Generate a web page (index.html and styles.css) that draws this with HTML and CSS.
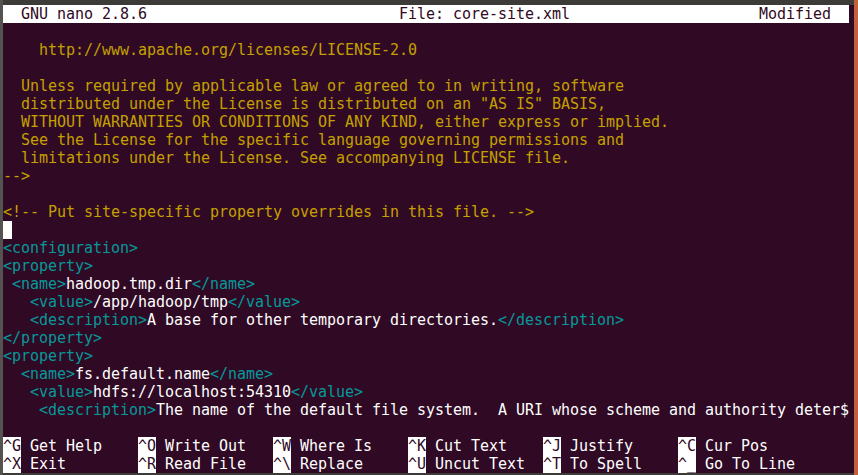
FILE: index.html
```html
<!DOCTYPE html>
<html>

<head>
  <title>GNU nano 2.8.6 - core-site.xml</title>
  <link rel="stylesheet" href="styles.css">
</head>

<body>
  <div class="edge-left"></div>
  <div class="window">
    <div class="chrome"></div>
    <div class="term">
      <div class="titlebar">  GNU nano 2.8.6                            File: core-site.xml                     Modified  </div>
<pre class="buffer">

<span class="cm">    http://www.apache.org/licenses/LICENSE-2.0</span>

<span class="cm">  Unless required by applicable law or agreed to in writing, software</span>
<span class="cm">  distributed under the License is distributed on an "AS IS" BASIS,</span>
<span class="cm">  WITHOUT WARRANTIES OR CONDITIONS OF ANY KIND, either express or implied.</span>
<span class="cm">  See the License for the specific language governing permissions and</span>
<span class="cm">  limitations under the License. See accompanying LICENSE file.</span>
<span class="cm">--&gt;</span>

<span class="cm">&lt;!-- Put site-specific property overrides in this file. --&gt;</span>
<span class="cursor"> </span>
<span class="tg">&lt;configuration&gt;</span>
<span class="tg">&lt;property&gt;</span>
 <span class="tg">&lt;name&gt;</span>hadoop.tmp.dir<span class="tg">&lt;/name&gt;</span>
   <span class="tg">&lt;value&gt;</span>/app/hadoop/tmp<span class="tg">&lt;/value&gt;</span>
   <span class="tg">&lt;description&gt;</span>A base for other temporary directories.<span class="tg">&lt;/description&gt;</span>
<span class="tg">&lt;/property&gt;</span>
<span class="tg">&lt;property&gt;</span>
  <span class="tg">&lt;name&gt;</span>fs.default.name<span class="tg">&lt;/name&gt;</span>
   <span class="tg">&lt;value&gt;</span>hdfs://localhost:54310<span class="tg">&lt;/value&gt;</span>
    <span class="tg">&lt;description&gt;</span>The name of the default file system.  A URI whose scheme and authority deter$

</pre>
      <div class="shortcuts">
        <div class="item"><span class="key">^G</span> Get Help</div>
        <div class="item"><span class="key">^O</span> Write Out</div>
        <div class="item"><span class="key">^W</span> Where Is</div>
        <div class="item"><span class="key">^K</span> Cut Text</div>
        <div class="item"><span class="key">^J</span> Justify</div>
        <div class="item"><span class="key">^C</span> Cur Pos</div>
        <div class="item"><span class="key">^X</span> Exit</div>
        <div class="item"><span class="key">^R</span> Read File</div>
        <div class="item"><span class="key">^\</span> Replace</div>
        <div class="item"><span class="key">^U</span> Uncut Text</div>
        <div class="item"><span class="key">^T</span> To Spell</div>
        <div class="item"><span class="key">^_</span> Go To Line</div>
      </div>
    </div>
  </div>
  <div class="edge-right"></div>
</body>

</html>
```

FILE: styles.css
```css
body {
margin: 0;
display: flex;
height: 475px;
overflow: hidden;
background-color: #3c3b37;
}

.edge-left {
width: 3px;
background-color: #55534f;
}

.edge-right {
width: 4px;
background-color: #c0603c;
}

.window {
width: 851px;
display: flex;
flex-direction: column;
}

.chrome {
height: 5px;
background-color: #3c3b37;
}

.term {
height: 468px;
background-color: #300a24;
color: #ffffff;
font-family: "DejaVu Sans Mono", "Liberation Mono", monospace;
font-size: 15px;
line-height: 18px;
letter-spacing: -0.03px;
}

.titlebar {
width: 846px;
height: 18px;
white-space: pre;
background-color: #ffffff;
color: #300a24;
}

.buffer {
margin: 0;
font: inherit;
height: 414px;
overflow: hidden;
}

.cm {
color: #c4a000;
}

.tg {
color: #06989a;
}

.cursor {
display: inline-block;
width: 9px;
height: 18px;
vertical-align: top;
background-color: #ffffff;
}

.shortcuts {
display: grid;
grid-template-columns: repeat(6, 135px);
}

.item {
white-space: pre;
height: 18px;
}

.key {
display: inline-block;
height: 18px;
vertical-align: top;
background-color: #ffffff;
color: #300a24;
}
```
